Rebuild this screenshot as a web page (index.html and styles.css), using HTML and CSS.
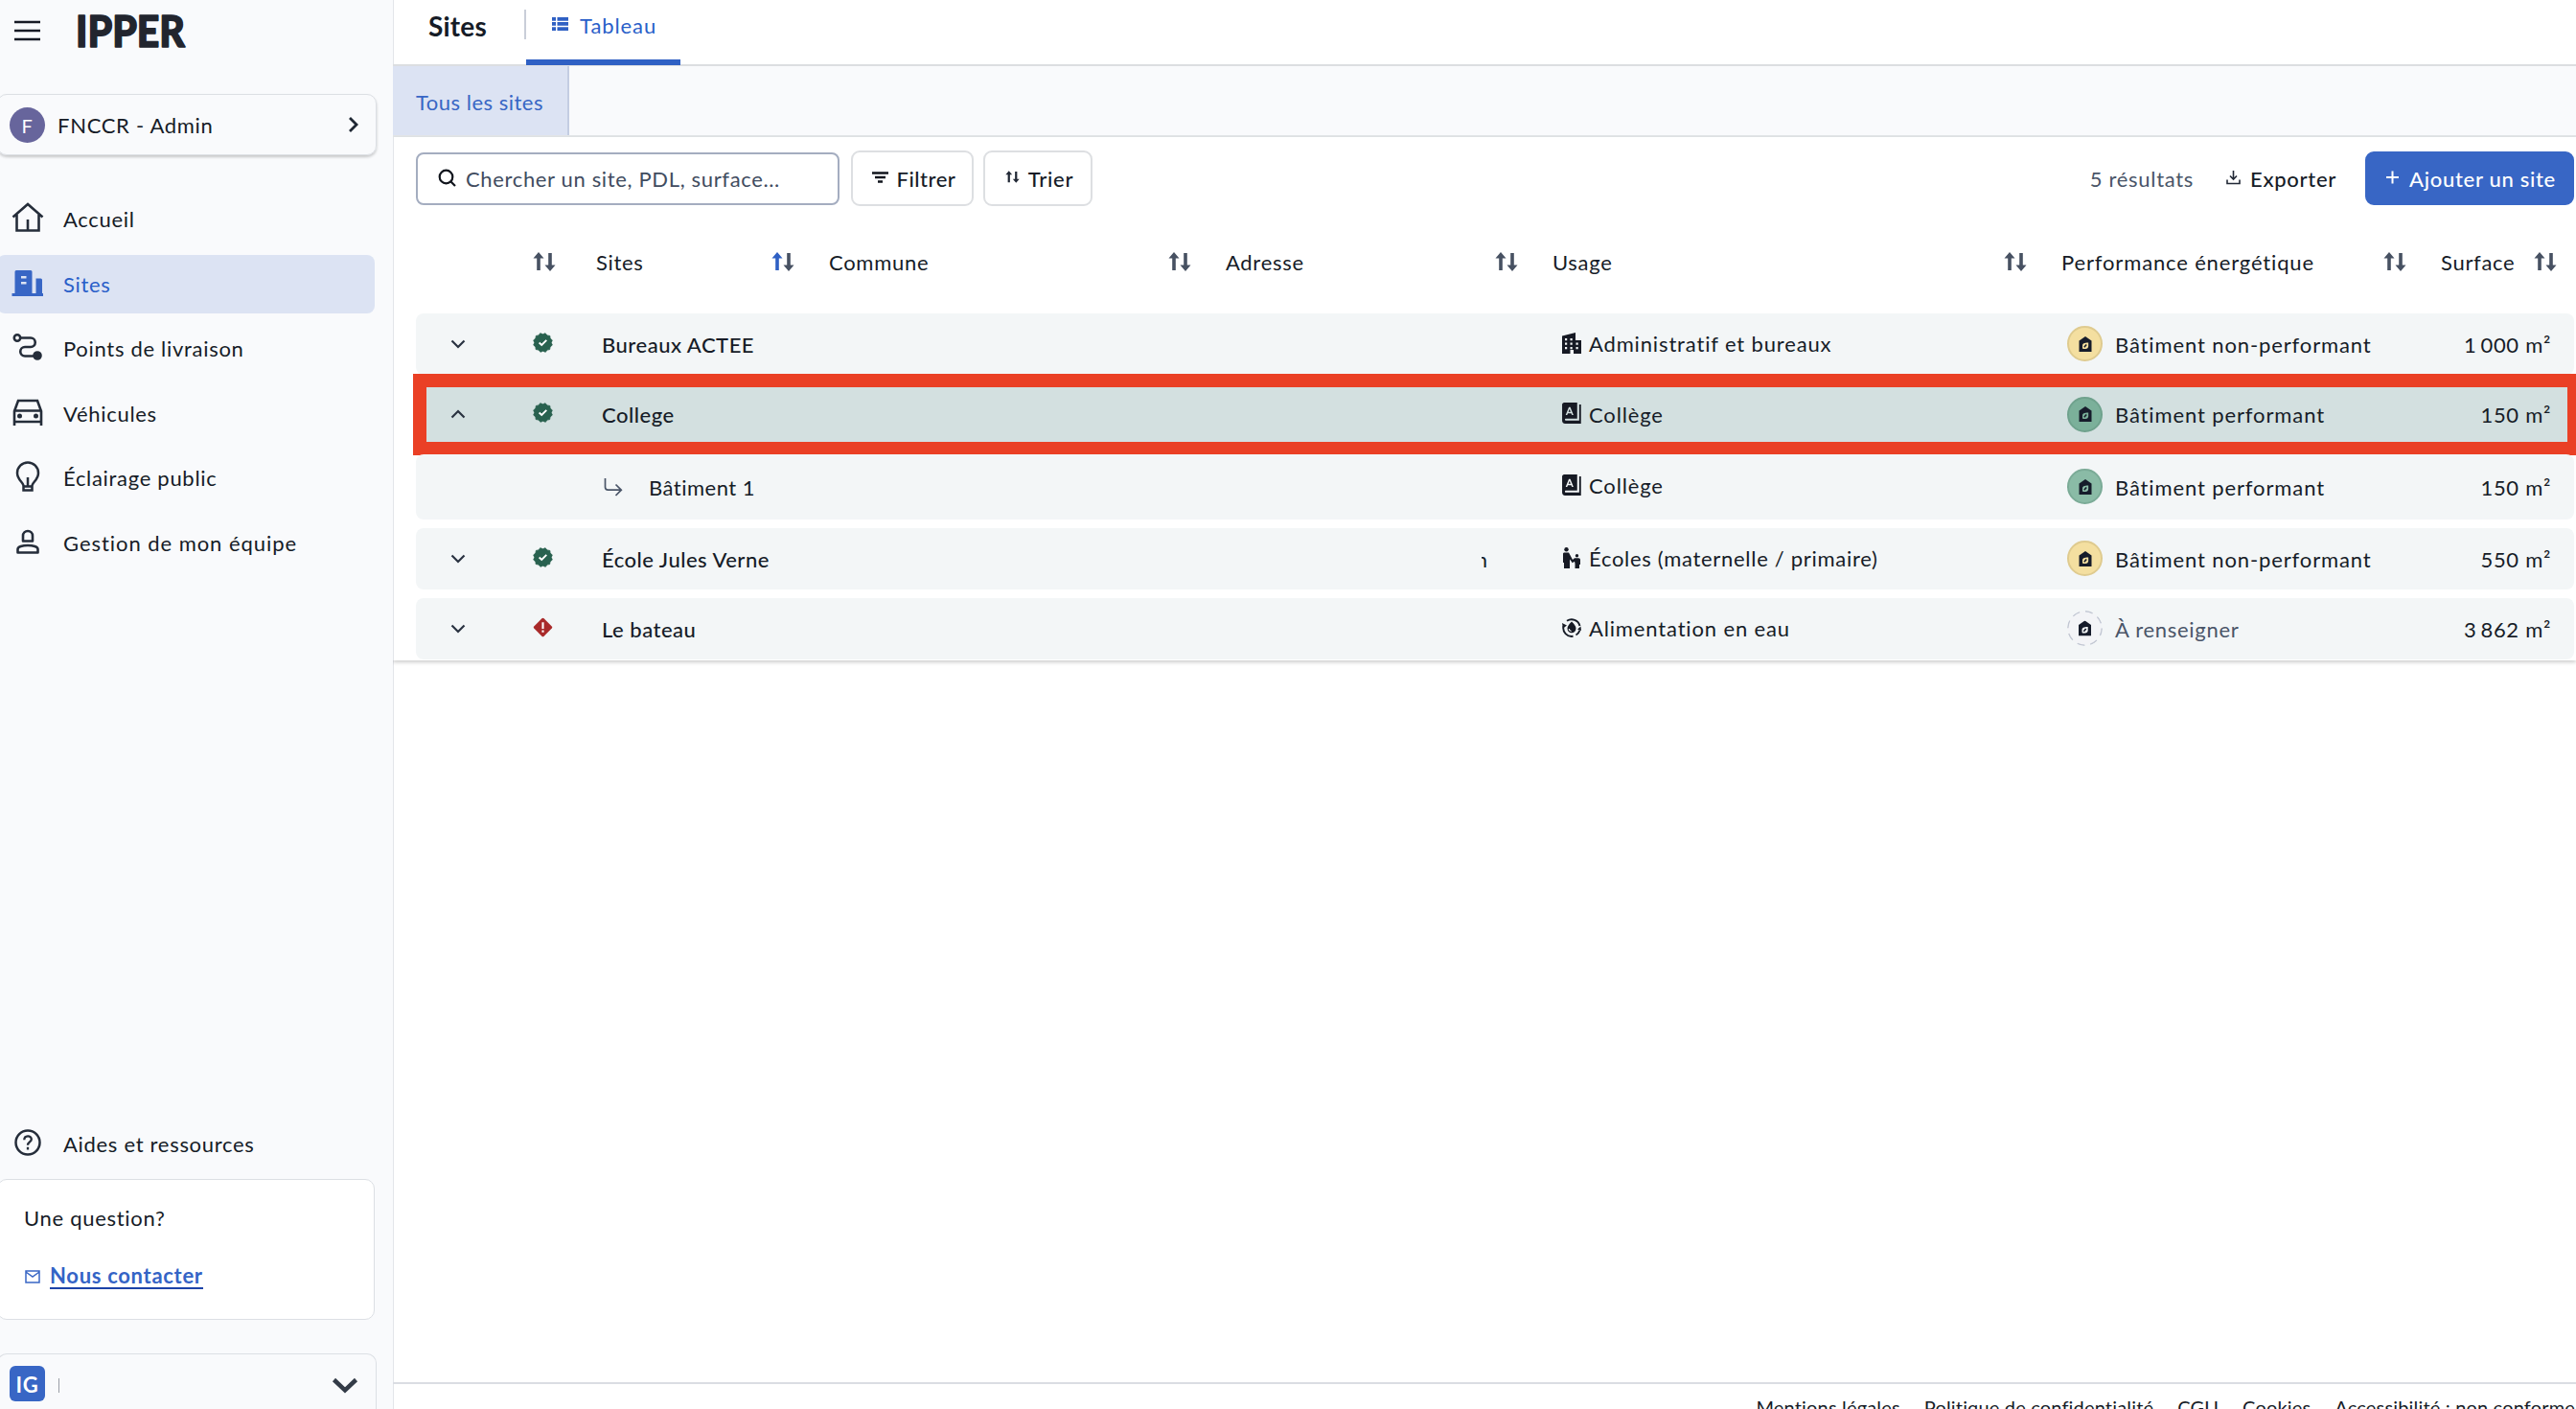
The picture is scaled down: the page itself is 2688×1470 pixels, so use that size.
FILE: index.html
```
<!DOCTYPE html>
<html lang="fr">
  <head>
    <meta charset="UTF-8" />
    <meta name="viewport" content="width=device-width, initial-scale=1.0" />
    <title>Sites</title>
    <link rel="stylesheet" href="styles.css">
  </head>
  <body>
    <!-- icons -->
    <svg class="icons" width="0" height="0">
      <symbol id="sort" viewBox="0 0 24 20">
        <path class="up" d="M6 0l5.500 6.500H7.800V19H4.200V6.500H.5z" />
        <path d="M18 20l-5.500-6.500h3.700V1h3.600v12.500h3.700z" />
      </symbol>
      <symbol id="down" viewBox="0 0 16 10">
        <path d="M1.500 1.500L8 8l6.500-6.500" fill="none" stroke="currentColor" stroke-width="2.200" />
      </symbol>
      <symbol id="verified" viewBox="0 0 20 20">
        <path d="M10 .4l2.150 1.600L15 1.700l.87 2.430L18.300 5.200l-.28 2.650L19.600 10l-1.580 2.150.28 2.650-2.430 1.070L15 18.300l-2.850-.28L10 19.600l-2.150-1.580L5 18.300l-.87-2.430L1.700 14.800l.28-2.650L.4 10l1.580-2.150L1.700 5.200l2.430-1.070L5 1.700l2.850.28z" transform="rotate(15 10 10)" fill="#28614f" stroke="#28614f" stroke-width=".8" stroke-linejoin="round" />
        <path d="M6.300 10l2.500 2.400 4.800-4.900" fill="none" stroke="#fff" stroke-width="1.800" />
      </symbol>
      <symbol id="alert" viewBox="0 0 20 20">
        <rect x="3" y="3" width="14" height="14" rx="1.500" transform="rotate(45 10 10)" fill="#a92a2a" />
        <path d="M10 5v6.500M10 12.800v2.200" stroke="#fff" stroke-width="2" />
      </symbol>
      <symbol id="office" viewBox="0 0 20 22">
        <path fill-rule="evenodd" d="M0 3.500L14 0v8h6v14h-8v-4H8.500v4H0zM3 6v2.200h2.200V6zm5.500 0v2.200h2.200V6zM3 10.500v2.200h2.200v-2.200zm5.500 0v2.200h2.200v-2.200zm6 0v2.200h2.200v-2.200zM3 15v2.200h2.200V15zm5.500 0v2.200h2.200V15zm6 0v2.200h2.200V15z" />
      </symbol>
      <symbol id="book" viewBox="0 0 19 21">
        <path fill-rule="evenodd" d="M2 0h13v16H3.500c-1 0-1 1.800 0 1.800H17V2h1.800v19H3c-2 0-3-1-3-3V2c0-1 1-2 2-2zM6.700 4.500l-3.200 8h1.500l.7-1.800h3.400l.7 1.800h1.500l-3.200-8zm.7 1.900l1.100 3H6.300z" />
      </symbol>
      <symbol id="family" viewBox="0 0 18 22">
        <circle cx="3.500" cy="2.200" r="2.200" />
        <circle cx="14.500" cy="8.800" r="1.700" />
        <path d="M1.500 5.500H6l4 7.500 2-1.700h4c1.500 0 2 .7 2 2V18h-1v4h-4.500v-5l-.5-2.200-2.200 1.400L7 12.500V22H1v-6H0V7c0-1 .5-1.500 1.500-1.500z" />
      </symbol>
      <symbol id="water" viewBox="0 0 20 20">
        <path d="M5 2.800A8.800 8.800 0 0 1 18.500 8M18.500 12.500a8.800 8.800 0 0 1-4 5M11.500 18.800A8.800 8.800 0 0 1 1.500 8" fill="none" stroke="currentColor" stroke-width="1.900" />
        <path d="M0 5l5 2.500L1 10.500zM20 13l-4-1.500 3.500-3zM10 3.500c3 3 4.500 5 4.500 7.200a4.500 4.500 0 0 1-9 0c0-2.200 1.500-4.200 4.500-7.200z" />
        <path d="M7.200 11c.2 1.500 1 2.300 2.400 2.500" fill="none" stroke="#fff" stroke-width="1.200" />
      </symbol>
      <symbol id="eco-house" viewBox="0 0 14 16">
        <path d="M7 0l6.500 4.500V16H.5V4.500z" fill="#161c2b" />
        <path d="M4 12V9.500C4 7.500 5.500 6.500 10.200 6.500V10c0 2-1.400 3-3 3H4.500z" fill="var(--leaf)" />
        <path d="M5.800 11.200l2.400-2.700" stroke="#161c2b" stroke-width="1.700" />
      </symbol>
    </svg>

    <div class="app">
      <aside class="sidebar">
        <div class="brand">
          <svg width="27" height="22" viewBox="0 0 27 22"><path d="M0 2h27M0 11h27M0 20h27" stroke="#161a24" stroke-width="2.700" /></svg>
          <svg class="logo" width="116" height="46" viewBox="0 0 116 46">
            <text x="0" y="37.500" textLength="114" lengthAdjust="spacingAndGlyphs">IPPER</text>
          </svg>
        </div>

        <div class="card account">
          <span class="avatar">F</span>
          <span class="account_name">FNCCR - Admin</span>
          <svg width="12" height="18" viewBox="0 0 12 18"><path d="M2 2l7 7-7 7" fill="none" stroke="#1f2733" stroke-width="2.800" /></svg>
        </div>

        <nav class="menu">
          <a class="menu_item">
            <svg width="34" height="32" viewBox="0 0 34 32" fill="none" stroke="#252d3a" stroke-width="2.600"><path d="M1.500 15.500L17 2l15.500 13.500M5.500 13v16.500h23V13M17 29v-11" /></svg>
            Accueil
          </a>
          <a class="menu_item active">
            <svg width="34" height="32" viewBox="0 0 34 32" fill="#3866c5"><path fill-rule="evenodd" d="M3.500 4.500a1.500 1.500 0 0 1 1.500-1.500h15a1.500 1.500 0 0 1 1.500 1.500V27h4V11.500h5a1.500 1.500 0 0 1 1.500 1.500v14H33v3H.5v-3h3zM10 9v2.500h5.500V9zm0 6v2.500h5.500V15z" /></svg>
            Sites
          </a>
          <a class="menu_item">
            <svg width="34" height="32" viewBox="0 0 34 32" fill="none" stroke="#252d3a" stroke-width="2.600"><circle cx="6" cy="6.500" r="3.200" /><path d="M9 6.500h11a4.700 4.700 0 0 1 0 9.500h-6a4.700 4.700 0 0 0 0 9.500h11" /><circle cx="27" cy="25" r="3.500" fill="#252d3a" /></svg>
            Points de livraison
          </a>
          <a class="menu_item">
            <svg width="34" height="32" viewBox="0 0 34 32" fill="none" stroke="#252d3a" stroke-width="2.600"><path d="M3 30V15L7 4h20l4 11v15M3 14.500h28M3 26h28" /><circle cx="8.500" cy="20" r="1.200" /><circle cx="25.500" cy="20" r="1.200" /></svg>
            Véhicules
          </a>
          <a class="menu_item">
            <svg width="34" height="32" viewBox="0 0 34 32" fill="none" stroke="#252d3a" stroke-width="2.500"><path d="M12.500 30.500v-5C12 22 6 19.500 6 12.500a11 11 0 0 1 22 0c0 7-6 9.500-6.500 13v5zM12.500 26.500h9M17 26v-9" /></svg>
            Éclairage public
          </a>
          <a class="menu_item">
            <svg width="34" height="32" viewBox="0 0 34 32" fill="none" stroke="#252d3a" stroke-width="2.600"><path d="M12 15.500V10a5 5 0 0 1 10 0v5.500zM6.500 27.500V24c0-2.500 5-4 10.500-4s10.500 1.500 10.500 4v3.500z" stroke-linejoin="round" /></svg>
            <span class="team">Gestion de mon équipe</span>
          </a>
        </nav>

        <div class="sidebar_bottom">
          <a class="menu_item">
            <svg width="34" height="32" viewBox="0 0 34 32" fill="none" stroke="#252d3a" stroke-width="2.500"><circle cx="17" cy="16" r="12.500" /><path d="M13.300 13.200c0-5 7.500-5 7.500-.7 0 3-3.800 3-3.800 6.300M17 20.800v2.700" stroke-width="2.300" /></svg>
            Aides et ressources
          </a>
          <div class="card question">
            <p>Une question?</p>
            <a class="contact">
              <svg width="16" height="14" viewBox="0 0 16 14" fill="none" stroke="#3866c5" stroke-width="1.500"><path d="M1 1h14v12H1zM1 2l7 5 7-5" /></svg>
              <span>Nous contacter</span>
            </a>
          </div>
          <div class="card profile">
            <span class="initials">IG</span>
            <span class="caret"></span>
            <svg width="28" height="18" viewBox="0 0 28 18"><path d="M2.500 2.500L14 13.500l11.500-11" fill="none" stroke="#333b47" stroke-width="4.500" /></svg>
          </div>
        </div>
      </aside>

      <main class="main">
        <header class="header">
          <h1>Sites</h1>
          <span class="separator"></span>
          <div class="tab">
            <svg width="17" height="14" viewBox="0 0 17 14" fill="#2f60c4"><path d="M0 0h4v3.700H0zM5.500 0H17v3.700H5.500zM0 5.100h4v3.700H0zM5.500 5.100H17v3.700H5.500zM0 10.200h4V14H0zM5.500 10.200H17V14H5.500z" /></svg>
            Tableau
          </div>
        </header>
        <div class="views">
          <div class="view">Tous les sites</div>
        </div>

        <section class="content">
          <div class="toolbar">
            <div class="search">
              <svg width="19" height="19" viewBox="0 0 19 19" fill="none" stroke="#11151d" stroke-width="2.200"><circle cx="8.500" cy="8.500" r="6.800" /><path d="M13 13l5 5" /></svg>
              Chercher un site, PDL, surface...
            </div>
            <button class="button filter">
              <svg width="17" height="12" viewBox="0 0 17 12"><path d="M0 1.500h17M3 6h11M6 10.500h5" stroke="#11151d" stroke-width="2.400" /></svg>
              Filtrer
            </button>
            <button class="button trier">
              <svg width="15" height="13" fill="#222936"><use href="#sort" /></svg>
              Trier
            </button>
            <span class="results">5 résultats</span>
            <a class="export">
              <svg width="15" height="15" viewBox="0 0 15 15" fill="none" stroke="#222936" stroke-width="1.600"><path d="M7.500 0v9M4 5.500L7.500 9 11 5.500M1 9.500v4h13v-4" /></svg>
              Exporter
            </a>
            <button class="button add">
              <svg width="13" height="14" viewBox="0 0 13 14"><path d="M0 7h13M6.500 .5v13" stroke="#fff" stroke-width="2" /></svg>
              Ajouter un site
            </button>
          </div>

          <div class="table">
            <div class="line head">
              <div><svg class="sort"><use href="#sort" /></svg></div>
              <div>Sites<svg class="sort sorted"><use href="#sort" /></svg></div>
              <div>Commune<svg class="sort"><use href="#sort" /></svg></div>
              <div>Adresse<svg class="sort"><use href="#sort" /></svg></div>
              <div>Usage<svg class="sort"><use href="#sort" /></svg></div>
              <div class="perf_title">Performance énergétique<svg class="sort"><use href="#sort" /></svg></div>
              <div>Surface<svg class="sort"><use href="#sort" /></svg></div>
            </div>

            <div class="line row">
              <div class="state">
                <svg class="toggle"><use href="#down" /></svg>
                <svg class="status"><use href="#verified" /></svg>
              </div>
              <div class="name">Bureaux ACTEE</div>
              <div></div>
              <div></div>
              <div class="usage"><svg><use href="#office" /></svg>Administratif et bureaux</div>
              <div class="perf"><span class="badge yellow"><svg><use href="#eco-house" /></svg></span>Bâtiment non-performant</div>
              <div class="surface">1<span class="thin">&nbsp;</span>000 m²</div>
            </div>

            <div class="line row selected">
              <div class="state">
                <svg class="toggle open"><use href="#down" /></svg>
                <svg class="status"><use href="#verified" /></svg>
              </div>
              <div class="name">College</div>
              <div></div>
              <div></div>
              <div class="usage"><svg><use href="#book" /></svg>Collège</div>
              <div class="perf"><span class="badge green"><svg><use href="#eco-house" /></svg></span>Bâtiment performant</div>
              <div class="surface">150 m²</div>
              <span class="highlight"></span>
            </div>

            <div class="line row child">
              <div></div>
              <div class="name">
                <svg width="20" height="19" viewBox="0 0 20 19" fill="none" stroke="#4a5568" stroke-width="1.700"><path d="M1.500 0v9c0 2 1 3.200 3 3.200H18M12.500 6.500l5.800 5.700-5.800 5.800" /></svg>
                Bâtiment 1
              </div>
              <div></div>
              <div></div>
              <div class="usage"><svg><use href="#book" /></svg>Collège</div>
              <div class="perf"><span class="badge green light"><svg><use href="#eco-house" /></svg></span>Bâtiment performant</div>
              <div class="surface">150 m²</div>
            </div>

            <div class="line row">
              <div class="state">
                <svg class="toggle"><use href="#down" /></svg>
                <svg class="status"><use href="#verified" /></svg>
              </div>
              <div class="name">École Jules Verne</div>
              <div></div>
              <div class="address"><span>n</span></div>
              <div class="usage school"><svg><use href="#family" /></svg>Écoles (maternelle / primaire)</div>
              <div class="perf"><span class="badge yellow"><svg><use href="#eco-house" /></svg></span>Bâtiment non-performant</div>
              <div class="surface">550 m²</div>
            </div>

            <div class="line row">
              <div class="state">
                <svg class="toggle"><use href="#down" /></svg>
                <svg class="status"><use href="#alert" /></svg>
              </div>
              <div class="name">Le bateau</div>
              <div></div>
              <div></div>
              <div class="usage"><svg><use href="#water" /></svg>Alimentation en eau</div>
              <div class="perf todo">
                <svg class="badge empty" viewBox="0 0 37 37">
                  <circle cx="18.500" cy="18.500" r="17.700" fill="#f3f4f7" stroke="#c2c7d3" stroke-width="1.500" stroke-dasharray="7.900 6" />
                  <use href="#eco-house" x="11.500" y="10.500" width="14" height="16" />
                </svg>
                À renseigner
              </div>
              <div class="surface">3<span class="thin">&nbsp;</span>862 m²</div>
            </div>
          </div>
        </section>

        <footer class="footer">
          <a>Mentions légales</a>
          <a>Politique de confidentialité</a>
          <a>CGU</a>
          <a>Cookies</a>
          <a>Accessibilité : non conforme</a>
        </footer>
      </main>
    </div>
  </body>
</html>
```

FILE: styles.css
```
* {
  box-sizing: border-box;
}

body {
  margin: 0;
  height: 1470px;
  overflow: hidden;
  font-family: Lato, "Open Sans", sans-serif;
  font-size: 22px;
  letter-spacing: 0.7px;
  line-height: 28px;
  color: #161c27;
  background-color: #fff;
}

.icons {
  position: absolute;
}

svg {
  flex: none;
}

.up {
  fill: var(--up, #222936);
}

.app {
  display: flex;
  height: 1470px;
}

/* sidebar */
.sidebar {
  width: 411px;
  flex: none;
  display: flex;
  flex-direction: column;
  background-color: #f9fafc;
  border-right: 1px solid #e3e5e9;
}

.brand {
  height: 98px;
  padding: 11px 0 0 15px;
  display: flex;
  align-items: flex-start;
  gap: 37px;
}

.brand svg:first-child {
  margin-top: 10px;
}

.logo {
  overflow: visible;
}

.logo text {
  font-family: Lato, sans-serif;
  font-size: 45px;
  font-weight: 900;
  letter-spacing: 0;
  fill: #22252e;
  stroke: #22252e;
  stroke-width: 1.5;
  stroke-linejoin: round;
}

.card {
  width: 396px;
  margin-left: -3px;
  border: 1px solid #dcdfe4;
  border-radius: 10px;
}

.account {
  height: 64px;
  flex: none;
  display: flex;
  align-items: center;
  padding: 0 17px 0 12px;
  box-shadow: 0 2px 3px rgba(0, 0, 0, 0.2);
}

.avatar {
  width: 37px;
  height: 37px;
  border-radius: 50%;
  background-color: #67659c;
  color: #fff;
  font-size: 20px;
  line-height: 39px;
  text-align: center;
}

.account_name {
  flex: 1;
  margin: 2px 0 0 13px;
}

.menu {
  margin-top: 36.500px;
  display: flex;
  flex-direction: column;
  gap: 6.500px;
}

.menu_item {
  width: 394px;
  height: 61px;
  margin-left: -3px;
  padding-left: 15px;
  display: flex;
  align-items: center;
  gap: 20px;
  border-radius: 8px;
}

.menu_item svg {
  margin-top: -4px;
}

.menu_item.active {
  background-color: #dce3f3;
  color: #2a5fc9;
}

.team {
  letter-spacing: 0.95px;
}

.sidebar_bottom {
  margin-top: auto;
}

.question {
  width: 394px;
  height: 147px;
  margin-top: 6px;
  padding: 26px 27px;
  background-color: #fff;
}

.question p {
  margin: 0 0 33px;
}

.contact {
  display: flex;
  align-items: center;
  gap: 10px;
  margin-left: 1px;
  font-weight: bold;
  color: #3464c6;
}

.contact span {
  border-bottom: 2px solid #1c43a8;
  line-height: 25px;
}

.profile {
  height: 58px;
  margin-top: 35px;
  padding: 12px 18px 0 12px;
  display: flex;
  border-bottom: none;
  border-radius: 10px 10px 0 0;
}

.initials {
  width: 37px;
  height: 37px;
  border-radius: 6px;
  background-color: #3866c5;
  color: #fff;
  font-weight: bold;
  text-align: center;
  line-height: 40px;
}

.caret {
  width: 1px;
  height: 15px;
  margin: 13px auto 0 14px;
  background-color: #9a9ea6;
}

.profile svg {
  margin-top: 12px;
}

/* main */
.main {
  flex: 1;
  margin-left: -1px;
  display: flex;
  flex-direction: column;
  overflow: hidden;
}

.header {
  height: 69px;
  flex: none;
  display: flex;
  padding-left: 37px;
  border-bottom: 2px solid #dcdee1;
}

.header h1 {
  width: 100px;
  margin: 13px 0 0;
  font-size: 28px;
  font-weight: bold;
  letter-spacing: 0.2px;
}

.separator {
  width: 2px;
  height: 31px;
  margin-top: 10px;
  background-color: #c9ced8;
}

.tab {
  width: 161px;
  height: 68px;
  padding: 13px 0 0 27px;
  display: flex;
  gap: 12px;
  letter-spacing: 0.9px;
  color: #2a5fc9;
  border-bottom: 6px solid #2f60c4;
}

.tab svg {
  margin-top: 5px;
}

.views {
  height: 74px;
  flex: none;
  background-color: #f9fafc;
  border-bottom: 2px solid #e3e6e8;
}

.view {
  width: 184px;
  height: 72px;
  padding-left: 24px;
  line-height: 75px;
  letter-spacing: 0.5px;
  color: #3866c5;
  background-color: #dce3f3;
  border-right: 2px solid #c3cde2;
}

.content {
  height: 546px;
  flex: none;
  padding: 14px 2px 0 24px;
  box-shadow: 0 2px 4px rgba(0, 0, 0, 0.2);
}

.toolbar {
  display: flex;
  align-items: center;
  height: 58px;
}

.search {
  width: 442px;
  height: 55px;
  padding: 2px 0 0 21px;
  display: flex;
  align-items: center;
  gap: 10px;
  border: 2px solid #a4adc0;
  border-radius: 8px;
  letter-spacing: 0.65px;
  color: #414c60;
}

.search svg {
  margin-top: -4px;
}

.button {
  height: 58px;
  margin-left: 12px;
  padding: 1px 0 0 3px;
  display: flex;
  align-items: center;
  justify-content: center;
  gap: 9px;
  font: inherit;
  font-weight: 500;
  letter-spacing: inherit;
  color: #161c27;
  background-color: #fff;
  border: 2px solid #dddfe2;
  border-radius: 9px;
}

.button svg {
  margin-top: -4px;
}

.filter {
  width: 128px;
  letter-spacing: 0.5px;
}

.trier {
  width: 114px;
  margin-left: 10px;
}

.results {
  margin: 2px 34px 0 auto;
  color: #4a5568;
}

.export {
  display: flex;
  align-items: center;
  gap: 10px;
  margin-top: 2px;
  font-weight: 500;
}

.export svg {
  margin-top: -4px;
}

.add {
  width: 218px;
  height: 56px;
  margin-left: 30px;
  gap: 11px;
  color: #fff;
  background-color: #3866c5;
  border-color: #3866c5;
}

/* table */
.line {
  display: grid;
  grid-template-columns: 164px 249px 414px 341px 531px 396px 157px;
}

.line > div {
  display: flex;
  align-items: center;
  white-space: nowrap;
}

.head {
  height: 112px;
}

.head > div {
  padding: 6px 18px 0 18px;
}

.head > div:nth-child(2) {
  padding-left: 24px;
}

.head .perf_title {
  letter-spacing: 0.85px;
}

.sort {
  --up: #475162;
  width: 24px;
  height: 20px;
  margin: -2px 0 0 auto;
  fill: #475162;
}

.sorted {
  --up: #2f60c4;
}

.row {
  position: relative;
  height: 63.500px;
  margin-bottom: 9.500px;
  background-color: #f3f6f7;
  border-radius: 8px;
}

.row .name,
.row .perf,
.row .surface {
  padding-top: 2px;
}

.row .usage {
  padding-top: 1px;
}

.row.selected {
  height: 64.500px;
  background-color: #d3e0e0;
}

.row.child {
  height: 67.500px;
}

.row.child .usage {
  padding-bottom: 2px;
}

.toggle {
  width: 16px;
  height: 10px;
  margin-left: 36px;
  color: #2a3341;
}

.toggle.open {
  transform: rotate(180deg);
}

.status {
  width: 21px;
  height: 21px;
  margin: -3px 0 0 70px;
}

.name {
  padding-left: 30px;
  font-weight: 500;
  letter-spacing: 0.5px;
}

.child .name {
  padding-left: 32px;
  gap: 27px;
  font-weight: 400;
}

.address span {
  width: 6px;
  margin: 3px 0 0 285px;
  display: flex;
  justify-content: flex-end;
  overflow: hidden;
  letter-spacing: 0;
}

.usage {
  padding-left: 28px;
  gap: 8px;
  letter-spacing: 0.85px;
}

.school {
  letter-spacing: 0.7px;
}

.usage svg {
  width: 20px;
  height: 22px;
  margin-top: -3px;
  fill: #161a24;
}

.perf {
  padding-left: 24px;
  letter-spacing: 0.88px;
}

.todo {
  letter-spacing: 0.7px;
  color: #4a5568;
}

.badge {
  --leaf: #f4dfa0;
  width: 37px;
  height: 37px;
  margin: -2px 13px 0 0;
  display: flex;
  align-items: center;
  justify-content: center;
  border-radius: 50%;
  border: 2px solid #dfcb8f;
  background-color: #f4dfa0;
}

.badge svg {
  width: 14px;
  height: 16px;
}

.badge.green {
  --leaf: #7bb09a;
  background-color: #7bb09a;
  border-color: #6fa28d;
}

.badge.light {
  --leaf: #8abba6;
  background-color: #8abba6;
  border-color: #7bab97;
}

.badge.empty {
  --leaf: #f3f6f7;
  background: none;
  border: none;
}

.surface {
  padding-right: 24px;
  justify-content: flex-end;
}

.thin {
  width: 4px;
}

/* frame drawn over the selected row */
.highlight {
  position: absolute;
  left: -3px;
  top: -10px;
  width: 2262px;
  height: 85px;
  border: 14px solid #ea4025;
}

.footer {
  height: 28px;
  margin-top: auto;
  flex: none;
  display: flex;
  justify-content: flex-end;
  gap: 25px;
  padding: 10px 1px 0 0;
  font-size: 20px;
  letter-spacing: 0.170px;
  border-top: 2px solid #dadde3;
  overflow: hidden;
  white-space: nowrap;
}
```
